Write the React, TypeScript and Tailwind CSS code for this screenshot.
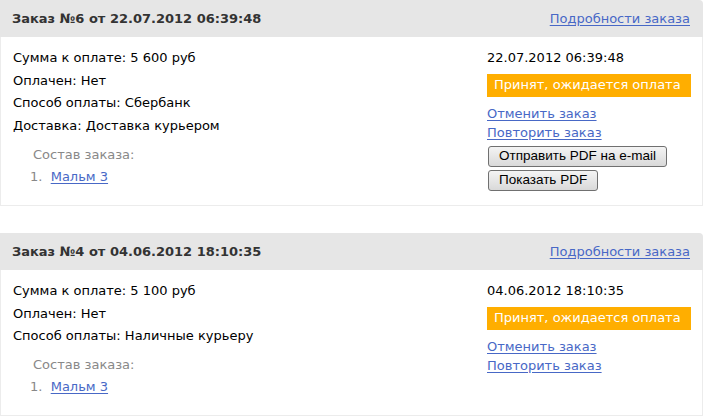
import React from 'react';

interface Order {
  id: number;
  date: string;
  sum: string;
  paid: string;
  payment: string;
  delivery?: string;
  items: string[];
  showPdf: boolean;
}

const orders: Order[] = [
  {
    id: 6,
    date: '22.07.2012 06:39:48',
    sum: '5 600 руб',
    paid: 'Нет',
    payment: 'Сбербанк',
    delivery: 'Доставка курьером',
    items: ['Мальм 3'],
    showPdf: true,
  },
  {
    id: 4,
    date: '04.06.2012 18:10:35',
    sum: '5 100 руб',
    paid: 'Нет',
    payment: 'Наличные курьеру',
    items: ['Мальм 3'],
    showPdf: false,
  },
];

const linkCls = 'text-[#4868c6] underline underline-offset-[2px]';

const PdfButton: React.FC<{ label: string }> = ({ label }) => (
  <button className="h-[21px] px-[10px] border border-[#707070] rounded-[3px] bg-gradient-to-b from-[#f4f4f4] to-[#d9d9d9] text-[13.5px] leading-none text-black font-['Liberation_Sans',Arial,sans-serif]">
    {label}
  </button>
);

const OrderCard: React.FC<{ order: Order }> = ({ order }) => (
  <div className="w-[703px]">
    <div className="h-[37px] flex items-center justify-between pl-3 pr-[13px] bg-[#e6e6e6] rounded-tr-[4px]">
      <span className="font-bold text-[#333] text-[13px]">
        Заказ №{order.id} от {order.date}
      </span>
      <a href="#" className={linkCls}>
        Подробности заказа
      </a>
    </div>
    <div className="flex pl-3 pt-[10px] pb-[14px] border-x border-b border-[#ececec] bg-white">
      <div className="flex-1 mb-[3px]">
        <div className="leading-[22.7px]">
          <div>Сумма к оплате: {order.sum}</div>
          <div>Оплачен: {order.paid}</div>
          <div>Способ оплаты: {order.payment}</div>
          {order.delivery && <div>Доставка: {order.delivery}</div>}
        </div>
        <div className="pl-5 mt-[6px] leading-[22px]">
          <div className="text-[#888]">Состав заказа:</div>
          <ol>
            {order.items.map((item, i) => (
              <li key={i} className="text-[#888] -ml-[3px]">
                {i + 1}.&nbsp;&nbsp;<a href="#" className={linkCls}>{item}</a>
              </li>
            ))}
          </ol>
        </div>
      </div>
      <div className="w-[204px] mr-[11px] flex flex-col items-start">
        <div className="leading-[22.7px]">{order.date}</div>
        <div className="mt-[4px] w-full h-[23px] flex items-center pl-[7px] bg-[#ffae00] text-white">
          Принят, ожидается оплата
        </div>
        <div className="mt-[7px] leading-[19px] flex flex-col items-start">
          <a href="#" className={linkCls}>Отменить заказ</a>
          <a href="#" className={linkCls}>Повторить заказ</a>
        </div>
        {order.showPdf && (
          <div className="mt-[4px] ml-px flex flex-col items-start gap-[3px]">
            <PdfButton label="Отправить PDF на e-mail" />
            <PdfButton label="Показать PDF" />
          </div>
        )}
      </div>
    </div>
  </div>
);

export default function App() {
  return (
    <div className="w-[704px] h-[416px] overflow-hidden bg-white text-black text-[13px] font-['DejaVu_Sans',Verdana,sans-serif] flex flex-col gap-[27px]">
      {orders.map((o) => (
        <OrderCard key={o.id} order={o} />
      ))}
    </div>
  );
}
